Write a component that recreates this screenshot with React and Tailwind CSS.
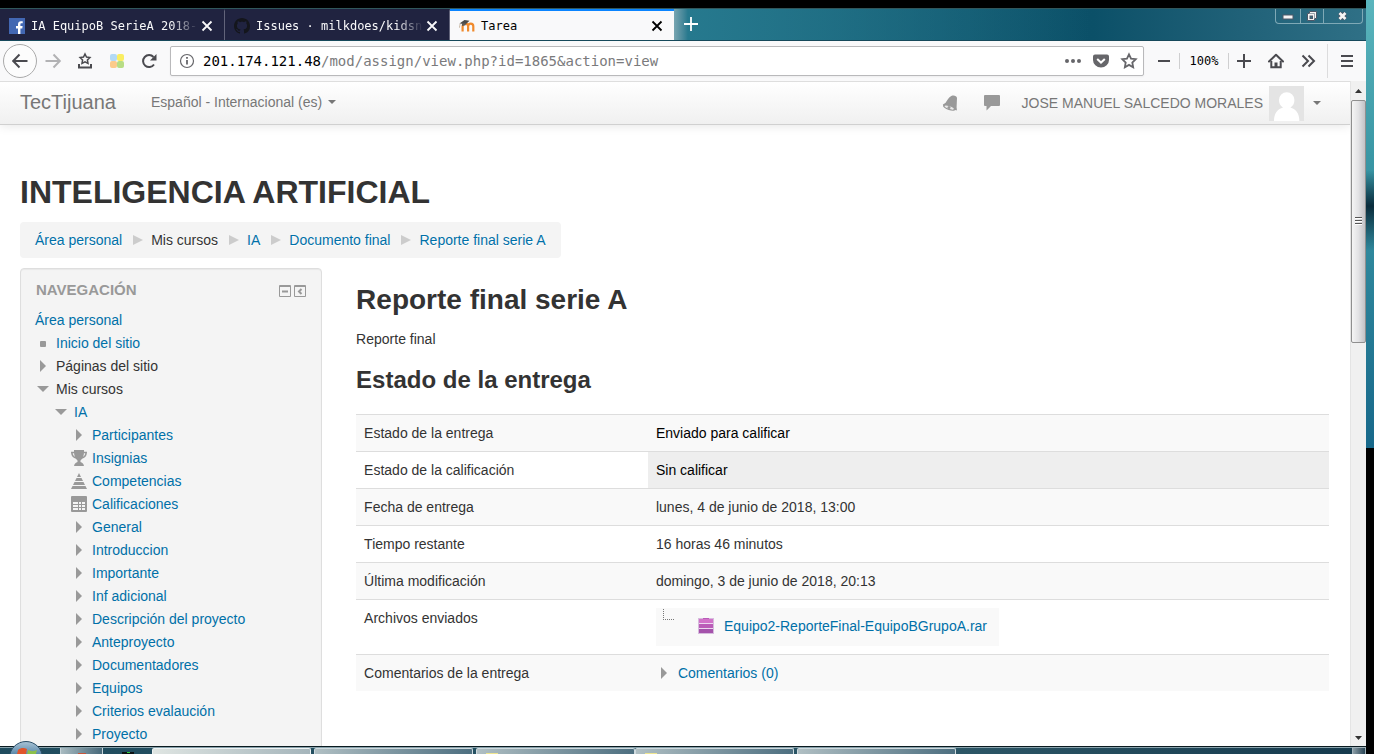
import React from "react";

const linkClass = "text-[#0070a8] hover:underline";

function FacebookIcon() {
  return (
    <svg width="16" height="16" viewBox="0 0 16 16" className="shrink-0">
      <rect width="16" height="16" fill="#4267b2" />
      <path d="M9 16v-5.600H7V8h2V6.300C9 4.300 10.200 3.200 12 3.200c.8 0 1.500.06 1.700.1v2h-1.200c-.9 0-1.100.5-1.100 1.100V8h2.200l-.3 2.400h-1.900V16z" fill="#fff" />
    </svg>
  );
}

function GithubIcon() {
  return (
    <svg width="16" height="16" viewBox="0 0 16 16" className="shrink-0" fill="#14161c">
      <path d="M8 0C3.580 0 0 3.580 0 8c0 3.540 2.290 6.530 5.470 7.590.4.070.55-.17.55-.38 0-.19-.01-.82-.01-1.490-2.010.37-2.530-.49-2.690-.94-.09-.23-.48-.94-.82-1.130-.28-.15-.68-.52-.01-.53.63-.01 1.080.58 1.230.82.72 1.210 1.870.87 2.330.66.070-.52.28-.87.51-1.070-1.780-.2-3.640-.89-3.640-3.950 0-.87.31-1.590.82-2.150-.08-.2-.36-1.020.08-2.120 0 0 .67-.21 2.200.82.64-.18 1.320-.27 2-.27s1.360.09 2 .27c1.530-1.040 2.200-.82 2.200-.82.44 1.100.16 1.920.08 2.120.51.56.82 1.270.82 2.150 0 3.070-1.870 3.750-3.650 3.950.29.25.54.73.54 1.480 0 1.070-.01 1.930-.01 2.200 0 .21.15.46.55.38A8.010 8.010 0 0 0 16 8c0-4.420-3.580-8-8-8z" />
    </svg>
  );
}

function MoodleIcon() {
  return (
    <svg width="16" height="16" viewBox="0 0 16 16" className="shrink-0">
      <path d="M3.600 13.500V8.600c0-2 1.300-2.900 2.900-2.900s2.600.9 2.600 2.600v5.200V8.300c0-1.700 1.100-2.600 2.600-2.600s2.600.9 2.600 2.600v5.200" fill="none" stroke="#f08a2c" strokeWidth="2.200" />
      <path d="M.5 5.400 5.500 2l5 .8-3.700 3.400z" fill="#4a4a48" />
      <path d="M3 5.500v2.600l3.600-.8V5z" fill="#5b5a57" />
      <path d="M1.200 5.600C.6 7 .8 8.500.5 9.700" stroke="#c9b9a5" fill="none" />
    </svg>
  );
}

function Cross({ className }) {
  return (
    <svg width="12" height="12" viewBox="0 0 12 12" className={className}>
      <path d="M1.500 1.500l9 9m0-9l-9 9" stroke="currentColor" strokeWidth="1.800" fill="none" />
    </svg>
  );
}

function Tab({ icon, title, active }) {
  return (
    <div
      className={
        active
          ? "flex h-full w-[224px] items-center border-t-2 border-[#0a84ff] bg-[#f9f9fa] pr-[11px] pl-[9px] text-black"
          : "flex h-full w-[225px] items-center border-t-2 border-r border-t-[#202340] border-r-[#62647a] bg-[#202340] pr-[11px] pl-[9px] text-[#f9f9fa]"
      }
    >
      {icon}
      <span
        className={
          active
            ? "ml-[6px] min-w-0 flex-1 whitespace-nowrap"
            : "ml-[6px] min-w-0 flex-1 [mask-image:linear-gradient(to_right,black_84%,transparent)] whitespace-nowrap"
        }
      >
        {title}
      </span>
      <button type="button" aria-label="Cerrar pestaña" className="ml-[3px]">
        <Cross />
      </button>
    </div>
  );
}

function TabBar() {
  return (
    <div className="flex h-[33px] shrink-0 items-stretch border-t border-b border-t-[#31575c] border-b-[#16495b] bg-linear-to-r from-[#2c7f93] via-[#0b5068] via-80% to-[#2f7086] font-['DejaVu_Sans_Mono','Liberation_Mono',monospace] text-xs">
      <Tab icon={<FacebookIcon />} title="IA EquipoB SerieA 2018-" />
      <Tab icon={<GithubIcon />} title="Issues · milkdoes/kidsn" />
      <Tab icon={<MoodleIcon />} title="Tarea" active />
      <div className="flex flex-1 items-start justify-between bg-linear-to-r from-[#78a5b1] from-0% via-[#26798e] via-2% to-transparent to-60%">
        <button type="button" aria-label="Nueva pestaña" className="mt-2 ml-[10px]">
          <svg width="14" height="14" viewBox="0 0 14 14">
            <path d="M7 0v14M0 7h14" stroke="#fff" strokeWidth="1.800" />
          </svg>
        </button>
        <div className="mr-[3px] flex h-[15px] rounded-b-[4px] border border-t-0 border-[#7fa9b6]">
          <button type="button" aria-label="Minimizar" className="flex w-[25px] items-center justify-center border-r border-[#7fa9b6] pt-[2px]">
            <svg width="12" height="6" viewBox="0 0 12 6">
              <rect x="1" y="1" width="10" height="4" fill="#f4f4f4" stroke="#4e5868" />
            </svg>
          </button>
          <button type="button" aria-label="Restaurar" className="flex w-[23px] items-center justify-center border-r border-[#7fa9b6]">
            <svg width="12" height="11" viewBox="0 0 12 11">
              <path d="M3.500.5h7v7h-2v2h-7v-7h2z" fill="#f4f4f4" stroke="#4e5868" />
              <path d="M3.500 2.500h5v5" fill="none" stroke="#9aa3ad" />
              <rect x="4" y="5" width="2.500" height="2.500" fill="#2d7086" stroke="#4e5868" />
            </svg>
          </button>
          <button type="button" aria-label="Cerrar" className="flex w-[38px] items-center justify-center pr-[2px]">
            <svg width="11" height="10" viewBox="0 0 11 10">
              <path d="M2.500 2l6 6m0-6l-6 6" stroke="#4e5868" strokeWidth="4.400" />
              <path d="M2.500 2l6 6m0-6l-6 6" stroke="#f6f6f6" strokeWidth="2.600" />
            </svg>
          </button>
        </div>
      </div>
    </div>
  );
}

function ToolButton({ label, className, children }) {
  return (
    <button type="button" aria-label={label} className={"flex h-8 items-center justify-center text-[#4a4a4f] " + (className || "w-8")}>
      <svg width="16" height="16" viewBox="0 0 16 16" fill="none" stroke="currentColor" strokeWidth="2" className="overflow-visible">
        {children}
      </svg>
    </button>
  );
}

const starPath = "M8 1.300l2.050 4.300 4.700.6-3.450 3.300.85 4.700L8 11.900l-4.150 2.300.85-4.700L1.250 6.200l4.700-.6z";

function Toolbar() {
  return (
    <div className="flex h-10 shrink-0 items-center bg-[#f9f9fa] pl-[3px]">
      <button type="button" aria-label="Atrás" className="flex h-[34px] w-[34px] items-center justify-center rounded-full border border-[#aaaaaa] bg-[#fcfcfc] text-[#4a4a4f]">
        <svg width="16" height="16" viewBox="0 0 16 16" fill="none" stroke="currentColor" strokeWidth="2">
          <path d="M15.500 8H1.500M7.500 1.500L1.200 8l6.300 6.500" />
        </svg>
      </button>
      <ToolButton label="Adelante" className="w-8 text-[#b2b2b4]!">
        <path d="M.5 8h14M8.500 1.500L14.800 8l-6.300 6.500" />
      </ToolButton>
      <ToolButton label="Marcadores">
        <path d="M8 1l1.500 3.100 3.400.5-2.500 2.400.6 3.400L8 8.800l-3 1.600.6-3.400-2.500-2.400 3.400-.5z" strokeWidth="1.500" />
        <path d="M2 11v3.600h12V11" />
      </ToolButton>
      <ToolButton label="Complemento">
        <g stroke="none">
          <rect x="1" y="1" width="7" height="7" rx="2" fill="#b3daf5" />
          <rect x="8" y="1" width="7" height="7" rx="2" fill="#faee62" />
          <rect x="1" y="8" width="7" height="7" rx="2" fill="#fccb8b" />
          <rect x="8" y="8" width="7" height="7" rx="2" fill="#b8dd85" />
        </g>
      </ToolButton>
      <ToolButton label="Recargar">
        <path d="M13 11.500A6 6 0 1 1 12.500 4" />
        <path d="M15.500 1v6.500H9z" fill="currentColor" stroke="none" />
      </ToolButton>
      <div className="mr-[5px] ml-[5px] flex h-[30px] flex-1 items-center rounded-xs border border-[#b9b9bb] bg-white pl-2 shadow-xs">
        <svg width="16" height="16" viewBox="0 0 16 16" className="shrink-0" fill="none" stroke="#66666a">
          <circle cx="8" cy="8" r="6.500" strokeWidth="1.200" />
          <path d="M8 7v4.500M8 4v1.800" strokeWidth="1.800" />
        </svg>
        <a href="#direccion" className="ml-2 flex-1 font-['DejaVu_Sans_Mono','Liberation_Mono',monospace] text-sm whitespace-nowrap text-[#7a7a7c]">
          <span className="text-black">201.174.121.48</span>/mod/assign/view.php?id=1865&amp;action=view
        </a>
        <ToolButton label="Acciones" className="w-7 text-[#66666a]!">
          <g fill="currentColor" stroke="none">
            <circle cx="2" cy="8" r="2" />
            <circle cx="8" cy="8" r="2" />
            <circle cx="14" cy="8" r="2" />
          </g>
        </ToolButton>
        <ToolButton label="Pocket" className="w-7 text-[#66666a]!">
          <path d="M2 1.500h12a2 2 0 0 1 2 2V7a8 7.500 0 0 1-16 0V3.500a2 2 0 0 1 2-2z" fill="currentColor" stroke="none" />
          <path d="M4.200 6L8 9.600 11.800 6" stroke="#fff" />
        </ToolButton>
        <ToolButton label="Añadir a marcadores" className="w-7 text-[#66666a]!">
          <path d={starPath} strokeWidth="1.800" />
        </ToolButton>
      </div>
      <ToolButton label="Reducir" className="w-[30px]">
        <path d="M2 8h12" />
      </ToolButton>
      <button type="button" className="h-4 w-[50px] border-r border-l border-[#cfcfd0] font-['DejaVu_Sans_Mono','Liberation_Mono',monospace] text-xs leading-[14px] text-black">
        100%
      </button>
      <ToolButton label="Aumentar" className="w-[30px]">
        <path d="M8 1v14M1 8h14" />
      </ToolButton>
      <ToolButton label="Inicio" className="ml-px w-8">
        <path d="M1 8.500L8 1.800l7 6.700" strokeLinejoin="round" strokeLinecap="round" />
        <path d="M3.300 8v6.200h9.400V8" />
        <path d="M8 14.500V9.500" strokeWidth="3" />
      </ToolButton>
      <ToolButton label="Más herramientas" className="w-8">
        <path d="M2.500 2.500L8 8l-5.500 5.500M8.500 2.500L14 8l-5.500 5.500" />
      </ToolButton>
      <button type="button" aria-label="Abrir menú" className="ml-[3px] flex h-[34px] w-[39px] items-center justify-center border-l border-[#dcdcdd] text-[#4a4a4f]">
        <svg width="16" height="16" viewBox="0 0 16 16" stroke="currentColor" strokeWidth="2">
          <path d="M2 3h12M2 8h12M2 13h12" />
        </svg>
      </button>
    </div>
  );
}

function Caret() {
  return (
    <svg width="8" height="4" viewBox="0 0 8 4" className="shrink-0">
      <path d="M0 0h8L4 4z" fill="#777" />
    </svg>
  );
}

function SiteHeader() {
  return (
    <header className="flex h-[44px] shrink-0 items-center border-t border-b border-t-[#dedede] border-b-[#d0d0d0] bg-linear-to-b from-white to-[#f0f0f0] pr-[29px] pl-5 text-[#777] shadow-[0_1px_10px_rgba(0,0,0,0.1)]">
      <a href="#inicio" className="pb-[2px] text-xl leading-5">
        TecTijuana
      </a>
      <button type="button" className="ml-[35px] flex items-center gap-[6px] pb-[2px]">
        Español - Internacional (es)
        <Caret />
      </button>
      <div className="ml-auto flex items-center">
        <button type="button" aria-label="Notificaciones">
          <svg width="16" height="16" viewBox="0 0 16 16" fill="#999">
            <path d="M10.500.6C12.500.2 15 1.200 15 3l-.4 9.200c0 1 .5 2 .2 3.200L.8 10c.5-1.200 2-1.200 3-2.500C5.500 5.500 7 1.400 10.500.6z" />
            <ellipse cx="7.500" cy="12.500" rx="6.800" ry="2.700" transform="rotate(18 7.500 12.500)" />
            <ellipse cx="7.200" cy="12.600" rx="4.800" ry="1.300" transform="rotate(18 7.200 12.600)" fill="#e9e9e9" />
            <circle cx="7" cy="12.500" r="1.500" />
          </svg>
        </button>
        <button type="button" aria-label="Mensajes" className="ml-[26px]">
          <svg width="16" height="16" viewBox="0 0 16 16" fill="#999">
            <path d="M1 0h14a1 1 0 0 1 1 1v9a1 1 0 0 1-1 1H7l-4.500 4.500V11H1a1 1 0 0 1-1-1V1a1 1 0 0 1 1-1z" />
          </svg>
        </button>
        <button type="button" className="ml-[22px] flex items-center">
          JOSE MANUEL SALCEDO MORALES
          <svg width="35" height="35" viewBox="0 0 35 35" className="mr-[9px] ml-[6px]">
            <rect width="35" height="35" fill="#e4e4e4" />
            <path d="M5 35c0-8 4-12 9-13.500C11 19.500 10 17 10 14a7.700 7.700 0 0 1 15.400 0c0 3-1 5.500-4 7.500 5 1.500 9 5.500 9 13.500z" fill="#fff" />
          </svg>
          <Caret />
        </button>
      </div>
    </header>
  );
}

const crumbs = ["Área personal", "Mis cursos", "IA", "Documento final", "Reporte final serie A"];

function Breadcrumbs() {
  return (
    <nav aria-label="Ruta" className="w-fit rounded-sm bg-[#f4f4f4] px-[15px] py-2 [text-shadow:0_1px_0_#fff]">
      <ol className="flex items-center">
        {crumbs.map((name, i) => (
          <li key={name} className="flex items-center">
            {i > 0 && (
              <svg width="10" height="10" viewBox="0 0 10 10" className="mr-2 ml-[11px]">
                <path d="M0 0l10 5-10 5z" fill="#ccc" />
              </svg>
            )}
            {name === "Mis cursos" ? (
              <span>{name}</span>
            ) : (
              <a href="#ruta" className={linkClass}>
                {name}
              </a>
            )}
          </li>
        ))}
      </ol>
    </nav>
  );
}

function NavIcon({ kind }) {
  return (
    <svg width="16" height="16" viewBox="0 0 16 16" fill="#999" className="shrink-0">
      {kind === "dot" && <rect x="5" y="6" width="6" height="6" rx="1" />}
      {kind === "closed" && <path d="M5 2l6 6-6 6z" />}
      {kind === "open" && <path d="M2 5h12l-6 6z" />}
      {kind === "trophy" && (
        <>
          <path d="M3 0h10v2c0 4-1.500 7-3.500 8.500V12c1.500.3 3 1.500 3.500 4H3c.5-2.500 2-3.700 3.500-4v-1.500C4.500 9 3 6 3 2z" />
          <path d="M4 2.500H.8C1 5.500 3 7.500 5.500 8M12 2.500h3.200C15 5.500 13 7.500 10.500 8" fill="none" stroke="#999" strokeWidth="1.600" />
        </>
      )}
      {kind === "pyramid" && (
        <path d="M8 0l2 4H6zM5.500 5h5l1.500 3H4zM3.500 9h9l1.500 3H2zM1.500 13h13L16 16H0z" />
      )}
      {kind === "grid" && (
        <>
          <rect width="16" height="16" rx="1" />
          <path d="M2 6h12v8H2z" fill="#f4f4f4" />
          <path d="M2 8.500h12M2 11.500h12M7.500 6v8M10.500 6v8" stroke="#999" />
        </>
      )}
    </svg>
  );
}

const courseItems = [
  ["closed", "Participantes"],
  ["trophy", "Insignias"],
  ["pyramid", "Competencias"],
  ["grid", "Calificaciones"],
  ["closed", "General"],
  ["closed", "Introduccion"],
  ["closed", "Importante"],
  ["closed", "Inf adicional"],
  ["closed", "Descripción del proyecto"],
  ["closed", "Anteproyecto"],
  ["closed", "Documentadores"],
  ["closed", "Equipos"],
  ["closed", "Criterios evalaución"],
  ["closed", "Proyecto"],
];

function NavRow({ kind, label, plain }) {
  return (
    <div className="flex h-[23px] items-center gap-[5px]">
      <NavIcon kind={kind} />
      {plain ? (
        <span>{label}</span>
      ) : (
        <a href="#nav" className={linkClass}>
          {label}
        </a>
      )}
    </div>
  );
}

function Sidebar() {
  return (
    <aside className="w-[23.08%] shrink-0 rounded-t-sm border border-[#dedede] bg-[#f4f4f4] px-[14px] pt-[11px] pb-5 shadow-[inset_0_1px_1px_rgba(0,0,0,0.05)]">
      <div className="mb-2 flex h-5 items-center justify-between">
        <h2 className="pl-px text-[15px] leading-5 font-bold text-[#999]">NAVEGACIÓN</h2>
        <div className="flex gap-[3px] pt-[2px] pr-px">
          <button type="button" aria-label="Ocultar bloque">
            <svg width="12" height="12" viewBox="0 0 12 12" stroke="#999" fill="none">
              <path d="M.5.5h11v11H.5zM0 1.500h12" />
              <path d="M3 6.500h6" strokeWidth="2" />
            </svg>
          </button>
          <button type="button" aria-label="Acoplar bloque">
            <svg width="12" height="12" viewBox="0 0 12 12" stroke="#999" fill="none">
              <path d="M.5.5h11v11H.5zM0 1.500h12" />
              <path d="M7.500 4L5 6.500 7.500 9" strokeWidth="2" />
            </svg>
          </button>
        </div>
      </div>
      <nav>
        <a href="#area" className={"flex h-[23px] items-center " + linkClass}>
          Área personal
        </a>
        <ul>
          <li>
            <NavRow kind="dot" label="Inicio del sitio" />
          </li>
          <li>
            <NavRow kind="closed" label="Páginas del sitio" plain />
          </li>
          <li>
            <NavRow kind="open" label="Mis cursos" plain />
            <ul className="pl-[18px]">
              <li>
                <NavRow kind="open" label="IA" />
                <ul className="pl-[18px]">
                  {courseItems.map(([kind, label]) => (
                    <li key={label}>
                      <NavRow kind={kind} label={label} />
                    </li>
                  ))}
                </ul>
              </li>
            </ul>
          </li>
        </ul>
      </nav>
    </aside>
  );
}

function SentFile() {
  return (
    <div className="flex w-fit items-start bg-[#f9f9f9] pr-3 pb-[10px] pl-[7px]">
      <span className="mt-px h-[11px] w-[11px] border-b border-l border-dotted border-[#777]" />
      <a href="#archivo" className="mt-2 ml-6 flex items-center gap-[10px] text-[#0070a8]">
        <svg width="16" height="16" viewBox="0 0 16 16">
          <rect width="16" height="16" fill="#d6bcdd" />
          <path d="M1 1h14v4H1z" fill="#d272c9" />
          <path d="M1 6h14v4H1z" fill="#bb5cb8" />
          <path d="M1 11h14v4H1z" fill="#a452ab" />
          <path d="M1 5.500h14M1 10.500h14" stroke="#ecd8f0" />
          <path d="M5 .5h6" stroke="#b95bb8" />
        </svg>
        Equipo2-ReporteFinal-EquipoBGrupoA.rar
      </a>
    </div>
  );
}

const rows = [
  { label: "Estado de la entrega", value: "Enviado para calificar", tone: "black" },
  { label: "Estado de la calificación", value: "Sin calificar", tone: "shaded" },
  { label: "Fecha de entrega", value: "lunes, 4 de junio de 2018, 13:00" },
  { label: "Tiempo restante", value: "16 horas 46 minutos" },
  { label: "Última modificación", value: "domingo, 3 de junio de 2018, 20:13" },
  { label: "Archivos enviados", value: <SentFile /> },
  {
    label: "Comentarios de la entrega",
    value: (
      <a href="#comentarios" className="flex items-center gap-[6px] text-[#0070a8]">
        <NavIcon kind="closed" />
        Comentarios (0)
      </a>
    ),
  },
];

const tones = { black: "text-black", shaded: "bg-[#eee] text-black" };

function Submission() {
  return (
    <main className="min-w-0 flex-1 pt-3">
      <h2 className="text-[28px] leading-10 font-bold">Reporte final serie A</h2>
      <p className="mt-[9px]">Reporte final</p>
      <h3 className="mt-[11px] text-2xl leading-10 font-bold">Estado de la entrega</h3>
      <table className="mt-[14px] w-full table-fixed border-collapse">
        <tbody>
          {rows.map((row) => (
            <tr key={row.label} className="border-t border-[#ddd] align-top odd:bg-[#f9f9f9]">
              <th scope="row" className="w-[30%] p-2 text-left font-normal">
                {row.label}
              </th>
              <td className={"p-2 " + (tones[row.tone] || "")}>{row.value}</td>
            </tr>
          ))}
        </tbody>
      </table>
    </main>
  );
}

function Scrollbar() {
  return (
    <div className="flex w-4 shrink-0 flex-col items-center border-l border-[#e4e4e4] bg-[#f0f0f0]">
      <svg width="7" height="4" viewBox="0 0 7 4" className="mt-2">
        <path d="M0 4h7L3.500 0z" fill="#333" />
      </svg>
      <div className="mt-[7px] flex h-[36.5%] w-full items-center justify-center rounded-xs border border-[#8f8f8f] bg-linear-to-r from-[#f5f5f5] via-[#e2e2e4] to-[#c2c2c6]">
        <svg width="7" height="9" viewBox="0 0 7 9">
          <path d="M0 .5h7M0 3.500h7M0 6.500h7" stroke="#555" />
          <path d="M0 1.500h7M0 4.500h7M0 7.500h7" stroke="#fff" />
        </svg>
      </div>
      <svg width="7" height="4" viewBox="0 0 7 4" className="mt-auto mb-[6px]">
        <path d="M0 0h7L3.500 4z" fill="#333" />
      </svg>
    </div>
  );
}

function TaskButton({ children, wide }) {
  return (
    <button
      type="button"
      aria-label="Ventana"
      className={
        wide
          ? "flex h-full w-[159px] items-end rounded-t-xs border border-b-0 border-[#cfdade] bg-linear-to-r from-[#b0bfc3] to-[#4d6f80] pl-[9px]"
          : "flex h-full w-[159px] items-end rounded-t-xs border border-b-0 border-[#eef2f3] bg-linear-to-r from-[#dfe5e2] to-[#a5b5bb] pl-[9px]"
      }
    >
      {children}
    </button>
  );
}

function FolderBit() {
  return <span className="h-px w-3 bg-[#efe58f]" />;
}

function Taskbar() {
  return (
    <div className="relative flex h-2 w-full shrink-0 border-t border-[#0a1a20] bg-linear-to-r from-[#1f4c5e] via-[#2c5666] via-70% to-[#15394c]">
      <button type="button" aria-label="Inicio" className="absolute -top-[6px] left-[9px] h-[13px] w-[34px] overflow-hidden">
        <svg width="34" height="34" viewBox="0 0 34 34">
          <defs>
            <linearGradient id="orb" x1="0" y1="0" x2="0" y2="1">
              <stop offset="0" stopColor="#a9c3d6" />
              <stop offset=".45" stopColor="#4d7fa3" />
              <stop offset="1" stopColor="#12456b" />
            </linearGradient>
          </defs>
          <circle cx="17" cy="17" r="16.500" fill="url(#orb)" stroke="#2b4f68" />
          <path d="M9 9c3-2.500 6-2.500 9-1l-1.500 7c-3-1.500-6-1.500-9 .5z" fill="#e0552b" />
          <path d="M19 9c3 1.500 6 1.500 9 0l-2 7c-3 1.500-6 1.500-8.500 0z" fill="#8cc04a" />
        </svg>
      </button>
      <div className="flex h-full flex-1 border-t border-[#88a2ac]">
        <button type="button" aria-label="Firefox" className="ml-[60px] flex h-full w-[43px] items-end justify-center border-x border-[#c6d3d8] bg-linear-to-r from-[#a9bbc1] to-[#47697a]">
          <span className="h-px w-2 bg-[#c8553a]" />
        </button>
        <div className="flex w-[49px] items-end justify-center">
          <svg width="12" height="2" viewBox="0 0 12 2">
            <path d="M0 1h12" stroke="#0b1112" strokeWidth="2" />
            <path d="M5 0h3v1H5z" fill="#2fd03a" />
          </svg>
        </div>
        <div className="flex h-full gap-[3px]">
          <TaskButton />
          <TaskButton wide />
          <div className="flex">
            <TaskButton wide>
              <FolderBit />
            </TaskButton>
            <TaskButton wide>
              <FolderBit />
            </TaskButton>
          </div>
          <TaskButton wide />
        </div>
      </div>
      <button type="button" aria-label="Mostrar escritorio" className="mr-2 h-full w-[14px] border border-b-0 border-[#9fb0b8] bg-linear-to-r from-[#8a9ca5] to-[#2a4555]" />
      <div className="absolute right-0 -top-px h-2 w-2 bg-black" />
    </div>
  );
}

export default function App() {
  return (
    <div className="flex h-screen flex-col overflow-hidden bg-black font-['Liberation_Sans',Arial,sans-serif] text-sm leading-5 text-[#333]">
      <div className="flex min-h-0 flex-1">
        <div className="flex min-w-0 flex-1 flex-col border-t-8 border-black">
          <TabBar />
          <Toolbar />
          <div className="flex min-h-0 flex-1 bg-white">
            <div className="flex min-w-0 flex-1 flex-col overflow-hidden">
              <SiteHeader />
              <div className="pt-[47px] pr-[21px] pl-5">
                <h1 className="mb-[10px] text-[32px] leading-10 font-bold">INTELIGENCIA ARTIFICIAL</h1>
                <Breadcrumbs />
                <div className="mt-[10px] flex gap-[34px]">
                  <Sidebar />
                  <Submission />
                </div>
              </div>
            </div>
            <Scrollbar />
          </div>
        </div>
        <div className="w-2 shrink-0">
          <div className="h-[60%] bg-linear-to-b from-[#5ab5bd] via-[#3a97a5] via-35% to-[#17688a]">
            <div className="h-full bg-linear-to-b from-transparent from-38% via-[#0a2c3c] via-46% to-transparent to-56%" />
          </div>
        </div>
      </div>
      <Taskbar />
    </div>
  );
}
